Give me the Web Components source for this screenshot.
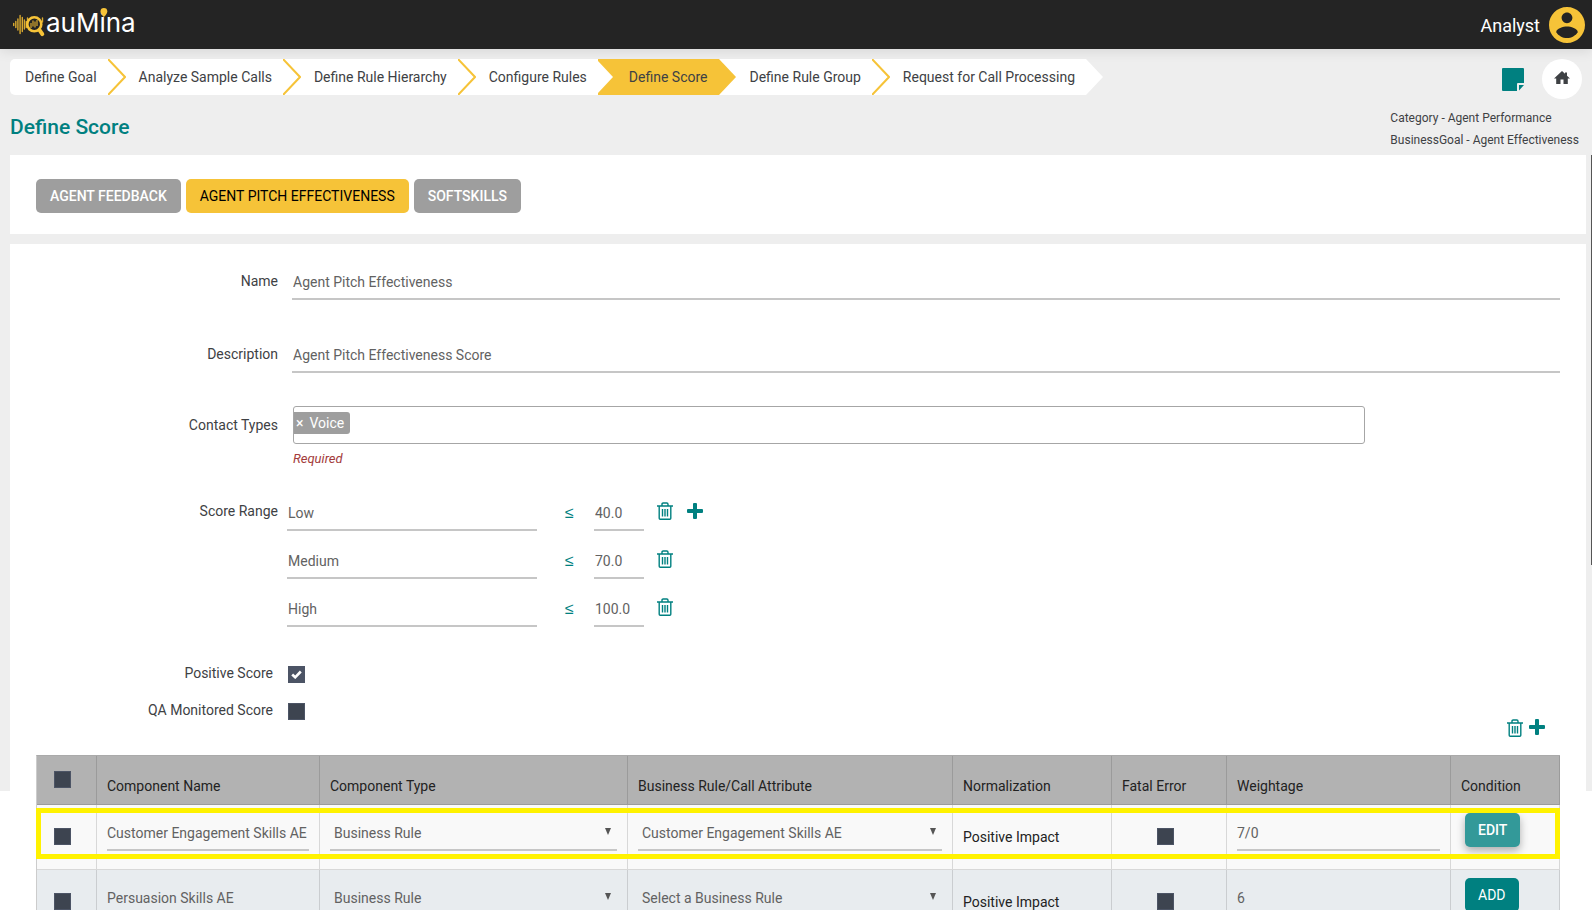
<!DOCTYPE html>
<html lang="en">
<head>
<meta charset="utf-8">
<title>auMina - Define Score</title>
<style>
  html, body { margin: 0; background: #fff; }
  body { font: 14px/20px Roboto, "Liberation Sans", sans-serif; color: #3e4144; overflow: hidden; }
</style>
</head>
<body>
<am-shell>
  <am-header slot="header"></am-header>
  <am-steps slot="bar">
    <am-step first>Define Goal</am-step>
    <am-step>Analyze Sample Calls</am-step>
    <am-step>Define Rule Hierarchy</am-step>
    <am-step flush>Configure Rules</am-step>
    <am-step active>Define Score</am-step>
    <am-step>Define Rule Group</am-step>
    <am-step last>Request for Call Processing</am-step>
  </am-steps>
  <am-quick slot="bar"></am-quick>
  <am-title slot="title">
    Define Score
    <span slot="line1">Category - Agent Performance</span>
    <span slot="line2">BusinessGoal - Agent Effectiveness</span>
  </am-title>
  <am-panel>
    <am-tabs>
      <am-button variant="muted">AGENT FEEDBACK</am-button>
      <am-button variant="current">AGENT PITCH EFFECTIVENESS</am-button>
      <am-button variant="muted">SOFTSKILLS</am-button>
    </am-tabs>
  </am-panel>
  <am-panel>
    <am-form></am-form>
    <am-components></am-components>
  </am-panel>
</am-shell>

<script>
const BASE = `
  *, *::before, *::after { box-sizing: border-box; }
  :host { display: block; }
  input, select, button { font: inherit; color: inherit; margin: 0; border-radius: 0; }
  a { color: inherit; text-decoration: none; }
  svg { display: block; }
  .line { width: 100%; height: 34px; padding: 0 1px; border: 0; border-bottom: 2px solid #c6c6c6;
          background: transparent; color: #626262; outline: 0; }
`;
const define = (name, html, setup) => {
  const tpl = document.createElement('template');
  tpl.innerHTML = html;
  customElements.define(name, class extends HTMLElement {
    constructor() {
      super();
      this.attachShadow({ mode: 'open' }).append(tpl.content.cloneNode(true));
    }
    connectedCallback() { if (setup) setup(this, this.shadowRoot); }
  });
};

define('am-shell', `<style>${BASE}
  :host { height: calc(100vh - 4px); overflow: hidden; position: relative;
          background: linear-gradient(#eee, #eee) no-repeat 0 0 / 100% calc(100% - 119px); }
  .bar { display: flex; justify-content: space-between; align-items: flex-start; padding: 10px 10px 0; height: 50px; }
  main { display: flex; flex-direction: column; gap: 10px; padding: 0 6px 0 10px; }
  .thumb { position: absolute; right: 0; top: 155px; width: 1px; height: 45%; background: #555; }
</style>
<slot name="header"></slot>
<div class="bar"><slot name="bar"></slot></div>
<slot name="title"></slot>
<main><slot></slot></main>
<div class="thumb"></div>`);

define('am-header', `<style>${BASE}
  header { display: flex; justify-content: space-between; align-items: center; height: 49px; padding: 0 7px 0 12px;
           background: #242424; box-shadow: 0 2px 12px rgba(0,0,0,.1); }
  .user { display: flex; align-items: center; gap: 9px; color: #fff; font-size: 18px; line-height: 24px; }
  .user span { padding-top: 2px; }
  text { font-family: Inter, sans-serif; font-size: 26px; fill: #fff; }
</style>
<header>
  <a href="#" aria-label="auMina">
    <svg width="130" height="49" viewBox="12 0 130 49">
      <g stroke="#d9a92f" stroke-width="1.4" stroke-linecap="round">
        <path d="M13.7 23.5v2M15.8 21.5v6M17.9 19v11M20.1 15.500v18M22.300 17.500v14M24.400 20v9M26.300 21.500v6M27.500 18v2M42.500 18v4"/>
      </g>
      <circle cx="34.300" cy="24.300" r="7" fill="none" stroke="#f6c338" stroke-width="2.600"/>
      <path d="M39.500 30l2.800 4.200" stroke="#f6c338" stroke-width="4" stroke-linecap="round"/>
      <path d="M31 23v5M33 20.500v6M35 21.500v6M37 20v6" stroke="#d9a92f" stroke-width="1.200"/>
      <text x="46" y="32">auMina</text>
      <path d="M100.500 11.500a3.400 3.400 0 1 1 6.800 0q0 2.200-3.400 5.500q-3.400-3.300-3.400-5.500z" fill="#f6c338"/>
    </svg>
  </a>
  <div class="user"><span>Analyst</span>
    <svg width="36" height="36" viewBox="2 2 20 20"><path fill="#f6c338" d="M12 2C6.480 2 2 6.480 2 12s4.480 10 10 10 10-4.480 10-10S17.520 2 12 2zm0 3c1.660 0 3 1.340 3 3s-1.340 3-3 3-3-1.340-3-3 1.340-3 3-3zm0 14.200c-2.500 0-4.710-1.280-6-3.220.030-1.990 4-3.080 6-3.080 1.990 0 5.970 1.090 6 3.080-1.290 1.940-3.500 3.220-6 3.220z"/></svg>
  </div>
</header>`);

define('am-steps', `<style>${BASE} nav { display: flex; }</style><nav aria-label="Steps"><slot></slot></nav>`);

define('am-step', `<style>${BASE}
  a { display: flex; align-items: center; height: 36px; background: #fff; white-space: nowrap; }
  span { padding: 0 11px 0 13px; }
  .notch { display: none; }
  :host([first]) a { border-radius: 5px 0 0 5px; }
  :host([first]) span { padding-left: 15px; }
  path { fill: none; stroke: #f6c338; stroke-width: 2; }
  :host([flush]) .tip { display: none; }
  :host([active]) a { background: linear-gradient(90deg, #f6c338 calc(100% - 18px), #fff 0); }
  :host([active]) .notch { display: block; }
  :host([active]) path { fill: #f6c338; stroke: none; }
  :host([active]) .notch path { fill: #fff; }
  :host([last]) a { background: linear-gradient(90deg, #fff calc(100% - 18px), transparent 0); }
  :host([last]) path { fill: #fff; stroke: none; }
</style>
<a href="#"><svg class="notch" width="18" height="36"><path d="M0 2L15 18L0 34z"/></svg><span><slot></slot></span><svg class="tip" width="18" height="36"><path d="M0 0L17 18L0 36"/></svg></a>`);

define('am-quick', `<style>${BASE}
  div { display: flex; align-items: center; gap: 18px; height: 40px; }
  button { border: 0; padding: 0; background: none; }
  .home { display: grid; place-items: center; width: 40px; height: 40px; border-radius: 50%; background: #fff; }
</style>
<div>
  <button aria-label="Notes"><svg width="22" height="23" viewBox="0 0 22 23"><path fill="#008080" d="M1 0h20a1 1 0 0 1 1 1v14h-6a1 1 0 0 0-1 1v7H1a1 1 0 0 1-1-1V1a1 1 0 0 1 1-1zM17 17h5l-5 5.500z"/></svg></button>
  <a class="home" href="#" aria-label="Home"><svg width="16" height="16" viewBox="0 0 16 16"><path fill="#3e4144" d="M8 0l3 2.800V1.500h2v3.200L16 7.500h-2.200V13H9.500V8.500h-3V13H2.200V7.500H0z"/></svg></a>
</div>`);

define('am-title', `<style>${BASE}
  section { display: flex; justify-content: space-between; height: 56px; padding: 0 13px 0 10px; }
  h1 { margin: 0; padding-top: 14px; font-size: 21px; line-height: 28px; font-weight: 500; color: #008080; }
  p { margin: 0; padding-top: 8px; font-size: 12px; line-height: 22px; }
  ::slotted(span) { display: block; }
</style>
<section><h1><slot></slot></h1><p><slot name="line1"></slot><slot name="line2"></slot></p></section>`);

define('am-panel', `<style>${BASE} :host { background: #fff; padding: 0 26px; }</style><slot></slot>`);

define('am-tabs', `<style>${BASE} div { display: flex; gap: 5px; padding: 24px 0 21px; }</style><div><slot></slot></div>`);

define('am-button', `<style>${BASE}
  :host { display: inline-block; }
  button { display: block; height: 34px; padding: 0 13px; border: 0; border-radius: 5px; background: #008080; color: #fff; white-space: nowrap; }
  :host([variant=muted]) button { padding: 0 14px; background: #9e9e9e; font-weight: 500; }
  :host([variant=current]) button { padding: 0 14px; background: #f6c338; color: #000; }
  :host([variant=raised]) button { background: #339999; font-weight: 500; box-shadow: 0 4px 8px rgba(0,0,0,.3); }
</style><button><slot></slot></button>`);

define('am-trash', `<style>${BASE} :host { display: inline-block; } button { border: 0; padding: 0; background: none; }</style>
<button aria-label="Delete"><svg width="16" height="18" viewBox="0 0 16 18"><path fill="none" stroke="#008080" stroke-width="1.400" d="M0 4h16M2.200 4v12.200q0 1 1 1h9.600q1 0 1-1V4M5 4V2.200q0-1.200 1.200-1.200h3.600q1.200 0 1.200 1.200V4M5.500 7v7.500M8 7v7.500M10.500 7v7.500"/></svg></button>`);

define('am-plus', `<style>${BASE} :host { display: inline-block; } button { border: 0; padding: 0; background: none; }</style>
<button aria-label="Add"><svg width="16" height="16" viewBox="0 0 16 16"><path fill="#008080" d="M6 1q0-1 1-1h2q1 0 1 1v5h5q1 0 1 1v2q0 1-1 1h-5v5q0 1-1 1H7q-1 0-1-1v-5H1q-1 0-1-1V7q0-1 1-1h5z"/></svg></button>`);

define('am-check', `<style>${BASE}
  label { display: flex; align-items: flex-end; gap: 15px; }
  span:empty { display: none; }
  span { width: 263px; text-align: right; }
  .box { position: relative; width: 17px; height: 17px; }
  input { appearance: none; display: block; width: 17px; height: 17px; background: #3d4450; border: 1px solid #4c5465; }
  input:checked { background: #4c5465; }
  svg { display: none; position: absolute; left: 3px; top: 4px; pointer-events: none; }
  input:checked + svg { display: block; }
</style>
<label><span></span><div class="box"><input type="checkbox"><svg width="11" height="9" viewBox="0 0 11 9"><path d="M1.200 4.500l3 2.800L9.800 1.500" fill="none" stroke="#fff" stroke-width="2.600"/></svg></div></label>`,
(el, root) => {
  const input = root.querySelector('input');
  root.querySelector('span').textContent = el.getAttribute('label') || '';
  if (!el.getAttribute('label')) input.setAttribute('aria-label', el.getAttribute('hint') || 'Select');
  input.checked = el.hasAttribute('checked');
});

define('am-field', `<style>${BASE}
  div { display: flex; gap: 14px; }
  label { flex: 0 0 268px; padding-top: 5px; text-align: right; }
</style><div><label for="f"></label><input class="line" id="f"></div>`,
(el, root) => {
  root.querySelector('label').textContent = el.getAttribute('label');
  root.querySelector('input').value = el.getAttribute('value');
});

define('am-tagbox', `<style>${BASE}
  .row { display: flex; gap: 15px; }
  label { flex: 0 0 268px; padding-top: 9px; text-align: right; }
  .col { flex: 1; padding-right: 195px; }
  .box { display: flex; align-items: flex-start; height: 38px; padding-top: 5px; border: 1px solid #a6a6a6; border-radius: 3px; }
  .tag { display: flex; align-items: center; gap: 6px; height: 22px; padding: 0 6px 0 2px; border-radius: 0 3px 3px 0; background: #9e9e9e; color: #fff; }
  .tag button { border: 0; padding: 0; background: none; line-height: 20px; }
  input { flex: 1; min-width: 0; border: 0; outline: 0; background: none; }
  em { display: block; padding-top: 5px; font-size: 13px; line-height: 20px; color: #a33b3b; }
</style>
<div class="row"><label for="c">Contact Types</label><div class="col">
  <div class="box"><span class="tag"><button aria-label="Remove Voice">×</button>Voice</span><input id="c"></div>
  <em>Required</em></div></div>`);

define('am-ranges', `<style>${BASE}
  fieldset { display: flex; gap: 9px; margin: 0; padding: 0; border: 0; }
  .label { flex: 0 0 268px; padding-top: 4px; text-align: right; }
  .rows { display: flex; flex-direction: column; gap: 14px; }
  .row { display: grid; grid-template-columns: 250px 57px 50px 29px 30px; height: 34px; }
  .le { padding: 6px 0 0 28px; color: #008080; font-family: "Liberation Sans", sans-serif; font-size: 16px; }
  am-trash { padding: 5px 0 0 13px; }
  am-plus { padding: 6px 0 0 14px; }
</style>
<fieldset aria-label="Score Range"><div class="label">Score Range</div><div class="rows"></div></fieldset>`,
(el, root) => {
  root.querySelector('.rows').innerHTML = [['Low', '40.0'], ['Medium', '70.0'], ['High', '100.0']].map(([n, v], i) =>
    `<div class="row"><input class="line" value="${n}" aria-label="Range name"><span class="le">≤</span><input class="line" value="${v}" aria-label="${n} limit"><am-trash></am-trash>${i ? '' : '<am-plus></am-plus>'}</div>`).join('');
});

define('am-form', `<style>${BASE}
  form { padding-top: 22px; margin-left: -26px; }
  am-field + am-field { margin-top: 39px; }
  am-tagbox { margin-top: 33px; }
  am-ranges { margin-top: 28px; }
  .end { display: flex; justify-content: space-between; align-items: flex-end; height: 75px; margin-top: 36px; }
  .checks { display: flex; flex-direction: column; align-self: flex-start; gap: 17px; }
  .tools { display: flex; gap: 6px; height: 19px; padding-right: 15px; }
</style>
<form>
  <am-field label="Name" value="Agent Pitch Effectiveness"></am-field>
  <am-field label="Description" value="Agent Pitch Effectiveness Score"></am-field>
  <am-tagbox></am-tagbox>
  <am-ranges></am-ranges>
  <div class="end">
    <div class="checks"><am-check label="Positive Score" checked></am-check><am-check label="QA Monitored Score"></am-check></div>
    <div class="tools"><am-trash></am-trash><am-plus></am-plus></div>
  </div>
</form>`);

define('am-select', `<style>${BASE}
  div { position: relative; }
  select.line { appearance: none; padding: 0 20px 0 4px; }
  div::after { content: ""; position: absolute; right: 6px; top: 11px; width: 6px; height: 7px; background: #555; clip-path: polygon(0 0, 100% 0, 50% 100%); pointer-events: none; }
</style><div><select class="line"><option></option></select></div>`,
(el, root) => {
  root.querySelector('option').textContent = el.getAttribute('value');
  root.querySelector('select').setAttribute('aria-label', el.getAttribute('label'));
});

define('am-components', `<style>${BASE}
  :host { padding-top: 17px; position: relative; }
  table { width: 100%; table-layout: fixed; border-spacing: 0; border: 1px solid #aaa; border-width: 1px 0 0 1px; border-left-color: #ccc; color: #222; }
  th, td { padding: 0 10px; border: 0 solid rgba(0,0,0,.13); border-width: 0 1px 1px 0; vertical-align: top; text-align: left; white-space: nowrap; }
  tr > :first-child { padding-left: 17px; }
  th { height: 49px; padding-top: 20px; font-weight: 400; background: #b2b2b2; }
  th:first-child { padding-top: 15px; }
  td { height: 65px; padding-top: 12px; background: #f9f9f9; }
  tr:nth-child(even) td { background: #e8ecef; }
  td.text { padding-top: 22px; }
  td.tick { padding-top: 23px; }
  td.mid { padding-left: 45px; }
  td.act { padding: 8px 0 0 14px; }
  .line { padding: 0; }
  .focus { position: absolute; left: 0; right: 0; top: 70px; height: 51px; border: 5px solid #fff200; pointer-events: none; }
</style>
<table>
  <colgroup><col style="width:60px"><col style="width:223px"><col style="width:308px"><col style="width:325px"><col style="width:159px"><col style="width:115px"><col style="width:224px"><col style="width:109px"></colgroup>
  <thead><tr><th><am-check hint="Select all"></am-check></th><th>Component Name</th><th>Component Type</th><th>Business Rule/Call Attribute</th><th>Normalization</th><th>Fatal Error</th><th>Weightage</th><th>Condition</th></tr></thead>
  <tbody></tbody>
</table>
<div class="focus"></div>`,
(el, root) => {
  const rows = [
    ['Customer Engagement Skills AE', 'Customer Engagement Skills AE', '7/0', 'EDIT', 'raised'],
    ['Persuasion Skills AE', 'Select a Business Rule', '6', 'ADD', 'solid'],
  ];
  root.querySelector('tbody').innerHTML = rows.map(([name, rule, weight, act, variant]) => `<tr>
    <td class="tick"><am-check hint="Select row"></am-check></td>
    <td><input class="line" aria-label="Component Name" value="${name}"></td>
    <td><am-select label="Component Type" value="Business Rule"></am-select></td>
    <td><am-select label="Business Rule/Call Attribute" value="${rule}"></am-select></td>
    <td class="text">Positive Impact</td>
    <td class="tick mid"><am-check hint="Fatal Error"></am-check></td>
    <td><input class="line" aria-label="Weightage" value="${weight}"></td>
    <td class="act"><am-button variant="${variant}">${act}</am-button></td></tr>`).join('');
});
</script>
</body>
</html>
